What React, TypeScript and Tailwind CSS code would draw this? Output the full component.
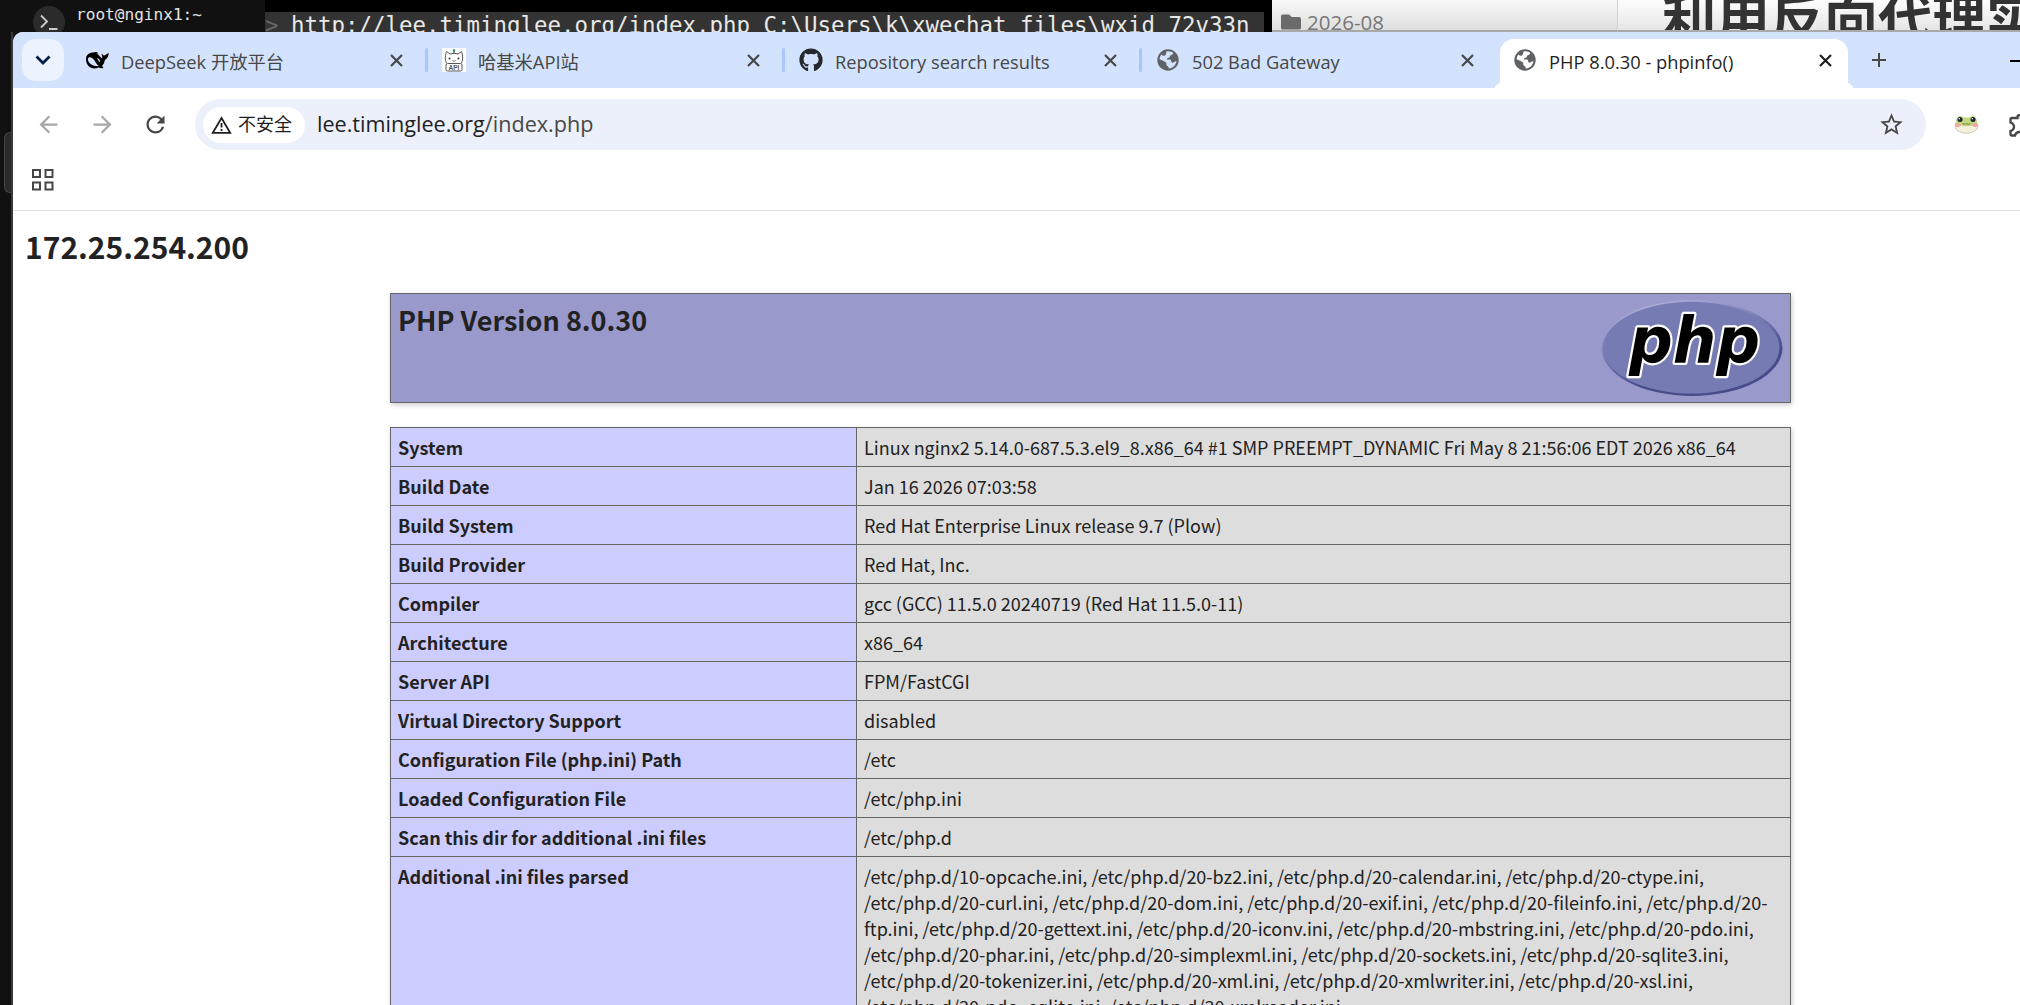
import type { ReactNode } from "react";
import { FaFolder, FaGithub } from "react-icons/fa";
import {
  MdAdd,
  MdArrowBack,
  MdArrowForward,
  MdOutlineExtension,
  MdRefresh,
  MdStarBorder,
} from "react-icons/md";

const CloseIcon = () => (
  <svg className="shrink-0" width="19" height="19" viewBox="0 0 19 19" fill="none" stroke="currentColor" strokeWidth="2.200">
    <path d="M4 4L15 15M15 4L4 15" />
  </svg>
);

const ChevronIcon = () => (
  <svg width="16" height="10" viewBox="0 0 16 10" fill="none" stroke="#041e49" strokeWidth="2.800">
    <path d="M1.500 1.500L8 8L14.500 1.500" />
  </svg>
);

const DeepSeekIcon = () => (
  <svg width="24" height="24" viewBox="0 0 24 24">
    <path
      fill="#000"
      d="M1 10C1.500 6.500 5 4.200 8.500 4.500C11 3.500 13.500 4 12.500 6C14.500 7.500 15.500 9.500 17 10.500C17.500 9.500 17 8 16.500 5.500C17.500 6.200 18 7.200 19 7.600C20.500 7.400 21.500 6.200 23.800 4.800C23.600 7.800 22.500 10.600 19.800 12C19.500 14.500 18.500 16.500 17 18L18.500 20C16.500 20.800 15 20 13.500 19.500C7.500 22.500 .5 18.500 1 10Z"
    />
    <path
      fill="#d3e3fd"
      d="M2.800 10.500C4.500 7.800 7.500 9.500 9.500 12.500C11 14.800 12 16.800 14 18C9 18.500 3 16.500 2.800 10.500ZM11.800 10.300C13.500 10 15.500 12 15 14.300C13.800 14 13.500 12 11.800 10.300Z"
    />
  </svg>
);

const CatIcon = () => (
  <svg width="24" height="24" viewBox="0 0 24 24" fill="none" stroke="#555" strokeWidth="1">
    <rect width="24" height="24" fill="#fff" stroke="none" />
    <path d="M12 5V2" stroke="#333" />
    <circle cx="12" cy="2.500" r="1.300" fill="#2f8a72" stroke="none" />
    <path d="M4.500 15C2.500 12 3.500 6 4.500 3.500L8 6Q12 4.800 16 6L19.500 3.500C20.500 6 21.500 12 19.500 15" />
    <path d="M10.500 12.500Q11.300 14 12 12.700Q12.700 14 13.500 12.500" />
    <circle cx="7.500" cy="10.500" r="1" fill="#333" stroke="none" />
    <circle cx="16.500" cy="10.500" r="1" fill="#333" stroke="none" />
    <rect x="4" y="15.500" width="16" height="7.500" rx="1.500" />
    <text x="12" y="22" textAnchor="middle" fontSize="6.500" fontWeight="700" fontFamily="Liberation Sans" fill="#555" stroke="none">
      API
    </text>
  </svg>
);

const GlobeIcon = ({ land }: { land: string }) => (
  <svg width="22" height="22" viewBox="0 0 22 22">
    <circle cx="11" cy="11" r="10.700" fill="#5f6368" />
    <path
      fill={land}
      d="M9.500 2.500C12.500 1.800 15 2.800 16.200 4C15.800 6 14.200 5.800 13.300 6.500C12.800 7.500 13 8.300 11.800 8.800C10.500 9 9.800 9.200 9.800 10.500H13.300C14.500 11 14 13.500 15.200 13.800C16.800 13.800 17.500 12.500 19.500 12C19 16 16 19.300 12 19.600C11.500 18.500 11.500 17.500 10.500 17C9 16.500 9.300 14.800 9.300 13.800C7.500 12 5 11 2.600 10.200C2.600 8.500 3.500 6.600 4.500 5.500C5.500 6.800 6.500 7.200 8 6.500C9.200 5.800 9 4 9.500 2.500Z"
    />
  </svg>
);

const FrogIcon = () => (
  <svg width="25" height="19" viewBox="0 0 25 19">
    <ellipse cx="12.500" cy="11" rx="11.500" ry="7.300" fill="#f3f0dc" stroke="#a9ad93" strokeWidth=".6" />
    <path d="M1.500 9C2 6 2.500 1 6 1C8 1 9 2 9.500 2.600H15.500C16 2 17 1 19 1C22.500 1 23 6 23.500 9C20 12 5 12 1.500 9Z" fill="#c3d77e" />
    <circle cx="6" cy="4.500" r="2.500" fill="#1d2433" />
    <circle cx="19" cy="4.500" r="2.500" fill="#1d2433" />
    <circle cx="5.300" cy="3.700" r=".7" fill="#fff" />
    <circle cx="18.300" cy="3.700" r=".7" fill="#fff" />
    <ellipse cx="3.800" cy="10" rx="2.800" ry="2" fill="#f5a6a6" />
    <ellipse cx="21.200" cy="10" rx="2.800" ry="2" fill="#f5a6a6" />
    <path d="M8.500 8.500Q10.500 9.800 12.500 8.800Q14.500 9.800 16.500 8.500" fill="none" stroke="#5d6b35" strokeWidth=".8" />
  </svg>
);

const WarningIcon = () => (
  <svg width="21" height="18" viewBox="0 0 21 18" fill="none" stroke="#1f1f1f" strokeWidth="1.800">
    <path d="M10.500 2L19.200 16.800H1.800Z" />
    <path d="M10.500 7V11.500M10.500 13V15" />
  </svg>
);

const PhpLogo = () => (
  <svg width="182" height="97" viewBox="0 0 182 97">
    <defs>
      <linearGradient id="rim" x1="0.25" y1="0" x2="0.75" y2="1">
        <stop offset="0" stopColor="#b4b5dc" />
        <stop offset=".4" stopColor="#777bb3" />
        <stop offset=".7" stopColor="#484c89" />
      </linearGradient>
    </defs>
    <ellipse cx="91" cy="48" rx="90.500" ry="48" fill="url(#rim)" />
    <ellipse cx="90.200" cy="47.700" rx="88.200" ry="45.900" fill="#777bb3" />
    <text
      x="28"
      y="63"
      fontFamily="DejaVu Sans"
      fontWeight="700"
      fontStyle="italic"
      fontSize="64"
      textLength="131"
      lengthAdjust="spacingAndGlyphs"
      fill="#000"
      stroke="#fff"
      strokeWidth="4.500"
      strokeLinejoin="round"
      paintOrder="stroke"
    >
      php
    </text>
  </svg>
);

interface TabProps {
  icon: ReactNode;
  title: string;
  active?: boolean;
  divider?: boolean;
}

const Tab = ({ icon, title, active, divider }: TabProps) => {
  return (
    <div className="flex w-[357px] shrink-0">
      <div
        className={
          active
            ? "relative flex h-[49px] w-[348px] items-center rounded-t-[14px] bg-white px-[13px] pb-[7px] text-[#1f1f1f]"
            : "flex h-[49px] w-[347px] items-center px-[13px] pb-[7px] text-[#474747]"
        }
      >
        {active && (
          <>
            <div className="absolute bottom-0 -left-2.5 size-2.5 rounded-br-[10px] bg-[#d3e3fd] shadow-[5px_5px_0_white] [clip-path:inset(0)]" />
            <div className="absolute -right-2.5 bottom-0 size-2.5 rounded-bl-[10px] bg-[#d3e3fd] shadow-[-5px_5px_0_white] [clip-path:inset(0)]" />
          </>
        )}
        <div className="flex size-6 items-center justify-center">{icon}</div>
        <span className="mt-[3px] ml-3 flex-1 text-[18.300px] leading-6 whitespace-nowrap">{title}</span>
        <CloseIcon />
      </div>
      {divider && <div className="mt-[9px] ml-[6px] h-6 w-[3px] rounded-sm bg-[#a8c7fa]" />}
    </div>
  );
};

const tabs: TabProps[] = [
  { icon: <DeepSeekIcon />, title: "DeepSeek 开放平台", divider: true },
  { icon: <CatIcon />, title: "哈基米API站", divider: true },
  { icon: <FaGithub className="size-6 text-[#24292f]" />, title: "Repository search results", divider: true },
  { icon: <GlobeIcon land="#d3e3fd" />, title: "502 Bad Gateway" },
  { icon: <GlobeIcon land="#ffffff" />, title: "PHP 8.0.30 - phpinfo()", active: true },
];

const rows = [
  ["System", "Linux nginx2 5.14.0-687.5.3.el9_8.x86_64 #1 SMP PREEMPT_DYNAMIC Fri May 8 21:56:06 EDT 2026 x86_64"],
  ["Build Date", "Jan 16 2026 07:03:58"],
  ["Build System", "Red Hat Enterprise Linux release 9.7 (Plow)"],
  ["Build Provider", "Red Hat, Inc."],
  ["Compiler", "gcc (GCC) 11.5.0 20240719 (Red Hat 11.5.0-11)"],
  ["Architecture", "x86_64"],
  ["Server API", "FPM/FastCGI"],
  ["Virtual Directory Support", "disabled"],
  ["Configuration File (php.ini) Path", "/etc"],
  ["Loaded Configuration File", "/etc/php.ini"],
  ["Scan this dir for additional .ini files", "/etc/php.d"],
  [
    "Additional .ini files parsed",
    "/etc/php.d/10-opcache.ini, /etc/php.d/20-bz2.ini, /etc/php.d/20-calendar.ini, /etc/php.d/20-ctype.ini, /etc/php.d/20-curl.ini, /etc/php.d/20-dom.ini, /etc/php.d/20-exif.ini, /etc/php.d/20-fileinfo.ini, /etc/php.d/20-ftp.ini, /etc/php.d/20-gettext.ini, /etc/php.d/20-iconv.ini, /etc/php.d/20-mbstring.ini, /etc/php.d/20-pdo.ini, /etc/php.d/20-phar.ini, /etc/php.d/20-simplexml.ini, /etc/php.d/20-sockets.ini, /etc/php.d/20-sqlite3.ini, /etc/php.d/20-tokenizer.ini, /etc/php.d/20-xml.ini, /etc/php.d/20-xmlwriter.ini, /etc/php.d/20-xsl.ini, /etc/php.d/30-pdo_sqlite.ini, /etc/php.d/30-xmlreader.ini",
  ],
];

// Windows that peek out above the browser
const Desktop = () => (
  <div className="flex h-8 shrink-0 overflow-hidden">
    <div className="flex w-[265px] shrink-0 bg-[#111111] pl-[33px]">
      <div className="mt-1.5 flex size-8 shrink-0 items-center justify-center rounded-full bg-[#2b2b2b]">
        <svg width="18" height="16" viewBox="0 0 18 16" fill="none" stroke="#ccc" strokeWidth="1.800">
          <path d="M1 1.500L7 7.500L1 13.500M9 15H17.500" />
        </svg>
      </div>
      <p className="mt-[5px] ml-[11px] font-['DejaVu_Sans_Mono'] text-[16.100px] leading-[19px] text-[#e4e4e4]">root@nginx1:~</p>
    </div>
    <div className="w-[1007px] shrink-0 bg-black pt-3">
      <div className="flex h-5 w-[999px] overflow-hidden bg-[#333333] font-['DejaVu_Sans_Mono'] text-[22.430px] leading-[26px] whitespace-pre text-[#e8e8e8]">
        <span className="w-[26px] text-[#666]">&gt;</span>
        <span>{"http://lee.timinglee.org/index.php C:\\Users\\k\\xwechat_files\\wxid_72v33n"}</span>
      </div>
    </div>
    <div className="flex w-[346px] shrink-0 items-start border-r border-b-2 border-r-[#d4d4d4] border-b-[#a9a9a9] bg-linear-to-b from-[#f8f8f8] to-[#dedede] pl-[9px] text-[#777]">
      <FaFolder className="mt-[12px] size-5 text-[#6b6b6b]" />
      <span className="mt-[8px] ml-1.5 font-['Open_Sans'] text-[20.500px] leading-[28px]">2026-08</span>
    </div>
    <div className="flex-1 overflow-hidden border-b-2 border-[#a9a9a9] bg-linear-to-b from-[#fdfdfd] to-[#e6e6e6] pl-[44px]">
      <p className="-mt-[10px] font-['Noto_Sans_CJK_SC'] text-[54px] leading-[54px] font-bold whitespace-nowrap text-[#333]">
        利用反向代理实
      </p>
    </div>
  </div>
);

const Toolbar = () => (
  <div className="flex h-[72px] shrink-0 items-center pt-px pl-[22px]">
    <MdArrowBack className="size-[27px] shrink-0 text-[#a8a8a8]" />
    <MdArrowForward className="ml-[27px] size-[27px] shrink-0 text-[#a8a8a8]" />
    <MdRefresh className="ml-[26px] size-[27px] shrink-0 text-[#474747]" />
    <div className="ml-[26px] flex h-[51px] w-[1731px] shrink-0 items-center rounded-full bg-[#ecf0fa] px-2">
      <div className="flex h-9 w-[102px] items-center rounded-full bg-white pl-2">
        <WarningIcon />
        <span className="ml-1.5 text-[18px] whitespace-nowrap text-[#1f1f1f]">不安全</span>
      </div>
      <span className="ml-3 flex-1 text-[21.600px] text-[#1f1f1f]">
        lee.timinglee.org<span className="text-[#474747]">/index.php</span>
      </span>
      <MdStarBorder className="mr-[13px] size-[27px] text-[#474747]" />
    </div>
    <div className="ml-[28px] shrink-0">
      <FrogIcon />
    </div>
    <MdOutlineExtension className="ml-[28px] size-[28px] shrink-0 text-[#474747]" />
  </div>
);

const PhpInfo = () => (
  <div className="flex-1 overflow-hidden bg-white font-['Noto_Sans_CJK_SC'] text-[#222]">
    <h2 className="pt-[13px] pl-3 text-[30px] leading-[44px] font-bold">172.25.254.200</h2>
    <div className="ml-[377px] w-[1401px]">
      <div className="mt-[25px] flex h-[110px] justify-between border border-[#666] bg-[#9999cc] px-[7px] pt-1.5 shadow-[1px_2px_5px_#ccc]">
        <h1 className="text-[27px] leading-[39px] font-bold">PHP Version 8.0.30</h1>
        <PhpLogo />
      </div>
      <table className="mt-6 w-[1401px] table-fixed border-collapse text-[18px] leading-[26px] shadow-[1px_2px_5px_#ccc]">
        <tbody>
          {rows.map(([name, value]) => (
            <tr key={name}>
              <td className="w-[466px] border border-[#666] bg-[#ccccff] px-[7px] py-1.5 align-top font-bold">{name}</td>
              <td className="border border-[#666] bg-[#dddddd] px-[7px] py-1.5 align-top">{value}</td>
            </tr>
          ))}
        </tbody>
      </table>
    </div>
  </div>
);

const App = () => {
  return (
    <div className="flex h-[1005px] w-[2020px] flex-col overflow-hidden bg-[#111111]">
      <Desktop />
      <div className="flex min-h-0 flex-1">
        <div className="flex w-[13px] shrink-0 flex-col items-end border-r-2 border-[#3a3a3a] pt-[100px]">
          <div className="h-[61px] w-[7px] rounded-l-md border border-r-0 border-[#444] bg-[#2a2a2a]" />
        </div>
        <div className="flex min-w-0 flex-1 flex-col overflow-hidden rounded-tl-[10px] bg-white font-['Open_Sans','Noto_Sans_CJK_SC',sans-serif]">
          <div className="flex h-14 shrink-0 bg-[#d3e3fd] pt-[7px]">
            <div className="ml-[9px] flex size-[42px] shrink-0 items-center justify-center rounded-[14px] bg-[#ecf2fe]">
              <ChevronIcon />
            </div>
            <div className="ml-2 flex">
              {tabs.map((tab) => (
                <Tab key={tab.title} {...tab} />
              ))}
            </div>
            <MdAdd className="mt-[9px] ml-[10px] size-6 shrink-0 text-[#474747]" />
            <div className="mt-[21px] ml-auto h-0.5 w-[10px] bg-black" />
          </div>
          <Toolbar />
          <div className="flex h-[51px] shrink-0 border-b border-[#dfdfdf] pt-[9px] pl-[19px]">
            <svg width="22" height="22" viewBox="0 0 22 22" fill="none" stroke="#474747" strokeWidth="2">
              <path d="M1 1H8V8H1ZM13.500 1H20.500V8H13.500ZM1 13.500H8V20.500H1ZM13.500 13.500H20.500V20.500H13.500Z" />
            </svg>
          </div>
          <PhpInfo />
        </div>
      </div>
    </div>
  );
};

export default App;
